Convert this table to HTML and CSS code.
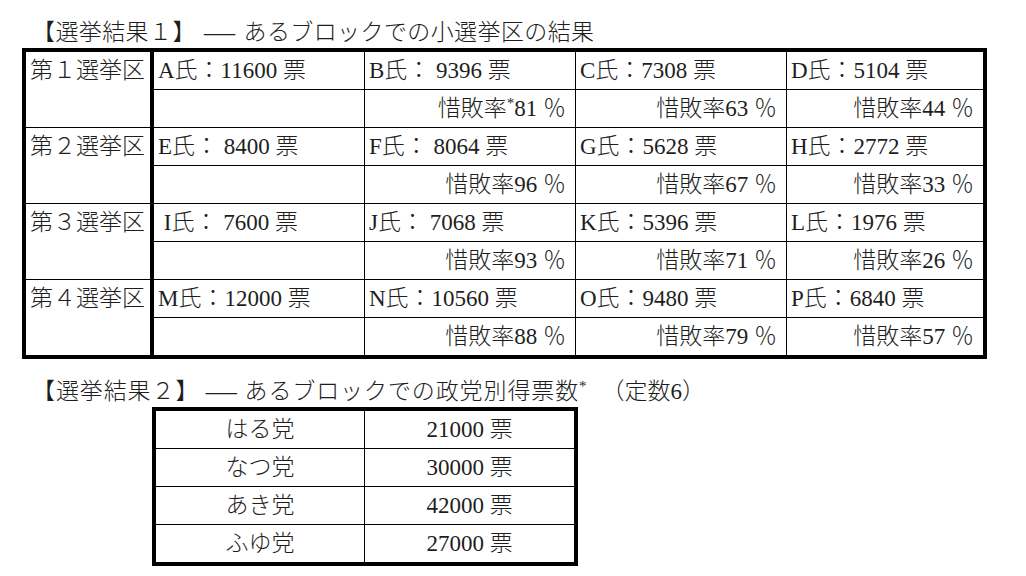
FILE: index.html
```html
<!DOCTYPE html>
<html lang="ja">
<head>
<meta charset="utf-8">
<title>選挙結果</title>
<link rel="stylesheet" href="styles.css">
</head>
<body>
<h1 class="title">【選挙結果１】 <span class="dash">―</span> あるブロックでの小選挙区の結果</h1>
<table class="results">
  <colgroup>
    <col class="c-dist"><col class="c-w"><col class="c-w"><col class="c-w"><col class="c-last">
  </colgroup>
  <tr>
    <th rowspan="2">第１選挙区</th>
    <td>A氏：11600 票</td>
    <td>B氏： 9396 票</td>
    <td>C氏：7308 票</td>
    <td class="end">D氏：5104 票</td>
  </tr>
  <tr>
    <td></td>
    <td class="rate">惜敗率<sup>*</sup>81 ％</td>
    <td class="rate">惜敗率63 ％</td>
    <td class="rate end">惜敗率44 ％</td>
  </tr>
  <tr>
    <th rowspan="2">第２選挙区</th>
    <td>E氏： 8400 票</td>
    <td>F氏： 8064 票</td>
    <td>G氏：5628 票</td>
    <td class="end">H氏：2772 票</td>
  </tr>
  <tr>
    <td></td>
    <td class="rate">惜敗率96 ％</td>
    <td class="rate">惜敗率67 ％</td>
    <td class="rate end">惜敗率33 ％</td>
  </tr>
  <tr>
    <th rowspan="2">第３選挙区</th>
    <td>&nbsp;I氏： 7600 票</td>
    <td>J氏： 7068 票</td>
    <td>K氏：5396 票</td>
    <td class="end">L氏：1976 票</td>
  </tr>
  <tr>
    <td></td>
    <td class="rate">惜敗率93 ％</td>
    <td class="rate">惜敗率71 ％</td>
    <td class="rate end">惜敗率26 ％</td>
  </tr>
  <tr>
    <th rowspan="2" class="bottom">第４選挙区</th>
    <td>M氏：12000 票</td>
    <td>N氏：10560 票</td>
    <td>O氏：9480 票</td>
    <td class="end">P氏：6840 票</td>
  </tr>
  <tr class="last">
    <td></td>
    <td class="rate">惜敗率88 ％</td>
    <td class="rate">惜敗率79 ％</td>
    <td class="rate end">惜敗率57 ％</td>
  </tr>
</table>

<h2 class="title title-2">【選挙結果２】 <span class="dash">―</span> あるブロックでの政党別得票数<sup>*</sup><span class="note">（定数6）</span></h2>
<table class="parties">
  <colgroup><col class="p-name"><col class="p-votes"></colgroup>
  <tr><td>はる党</td><td class="end">21000 票</td></tr>
  <tr><td>なつ党</td><td class="end">30000 票</td></tr>
  <tr><td>あき党</td><td class="end">42000 票</td></tr>
  <tr class="last"><td>ふゆ党</td><td class="end">27000 票</td></tr>
</table>
</body>
</html>
```
FILE: styles.css
```css
html, body {
  margin: 0;
  padding: 0;
  background: #ffffff;
}

body {
  font-family: "Liberation Serif", "Noto Sans CJK JP", serif;
  font-size: 23px;
  font-weight: 300;
  color: #1e1e1e;
}

.title {
  margin: 17px 0 0 32px;
  font-size: 23px;
  font-weight: 300;
  line-height: 31px;
  white-space: nowrap;
  letter-spacing: 0.4px;
}

.title-2 {
  margin-top: 17px;
  letter-spacing: 0.9px;
}

.dash {
  display: inline-block;
  transform: scaleX(1.35);
  margin: 0 6px;
}

.title-2 .dash {
  margin: 0 4px;
}

.note {
  margin-left: 14px;
  letter-spacing: 0;
}

sup {
  font-size: 15px;
  line-height: 0;
  vertical-align: 8px;
}

table {
  border-collapse: separate;
  border-spacing: 0;
  table-layout: fixed;
  border: 4px solid #000;
}

td, th {
  padding: 0 5px;
  height: 37px;
  line-height: 37px;
  font-weight: 300;
  white-space: nowrap;
  border-right: 1px solid #000;
  border-bottom: 1px solid #000;
  text-align: left;
  vertical-align: middle;
}

tr.last td,
th.bottom {
  border-bottom: none;
}

td.end {
  border-right: none;
}

.results {
  margin-left: 22px;
  width: 965px;
}

.results th {
  vertical-align: top;
  border-right: 4px solid #000;
  padding: 0 0 0 4px;
}

.c-dist { width: 128px; }
.c-w { width: 211px; }
.c-last { width: 196px; }

.results td {
  padding-left: 4px;
}

.results td.rate {
  text-align: right;
  padding-right: 9px;
}

.parties {
  margin-left: 152px;
  width: 426px;
}

.p-name { width: 209px; }
.p-votes { width: 209px; }

.parties td {
  text-align: center;
  padding: 0;
}
```
